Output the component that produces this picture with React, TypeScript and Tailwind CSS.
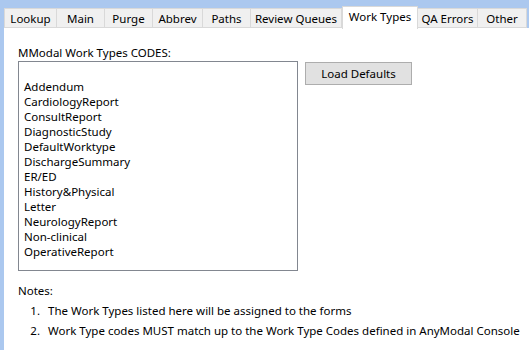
import React from "react";

const tabs = [
  { label: "Lookup", w: "w-[53px]" },
  { label: "Main", w: "w-[48px]" },
  { label: "Purge", w: "w-[48px]" },
  { label: "Abbrev", w: "w-[50px]" },
  { label: "Paths", w: "w-[48px]" },
  { label: "Review Queues", w: "w-[91px]" },
  { label: "Work Types", w: "w-[76px]", active: true },
  { label: "QA Errors", w: "w-[60px]" },
  { label: "Other", w: "w-[49px]" },
];

const items = [
  "",
  "Addendum",
  "CardiologyReport",
  "ConsultReport",
  "DiagnosticStudy",
  "DefaultWorktype",
  "DischargeSummary",
  "ER/ED",
  "History&Physical",
  "Letter",
  "NeurologyReport",
  "Non-clinical",
  "OperativeReport",
];

export default function App() {
  return (
    <div className="w-[529px] h-[350px] bg-[#abc8ef] flex flex-col overflow-hidden text-[11.5px] leading-[15px] text-black [font-family:'Noto_Sans',sans-serif]">
      <div className="flex items-end pl-[4px] pt-[5px] h-[28px] shrink-0">
        {tabs.map((t) =>
          t.active ? (
            <div
              key={t.label}
              className={`${t.w} h-[23px] bg-white border border-b-0 border-[#d9d9d9] flex items-start justify-center pt-[2px] relative z-10 -mb-px whitespace-nowrap`}
            >
              {t.label}
            </div>
          ) : (
            <div
              key={t.label}
              className={`${t.w} h-[20px] bg-[#f0f0f0] border border-l-0 first:border-l border-[#d9d9d9] flex items-center justify-center whitespace-nowrap`}
            >
              {t.label}
            </div>
          )
        )}
      </div>
      <div className="flex-1 ml-[4px] bg-white pl-[14px] pt-[17px]">
        <div>MModal Work Types CODES:</div>
        <div className="flex items-start mt-px">
          <div className="w-[280px] h-[210px] border border-[#828790] pl-[5px] pt-[2px]">
            {items.map((it, i) => (
              <div key={i} className="h-[15px] whitespace-nowrap">
                {it}
              </div>
            ))}
          </div>
          <button className="ml-[7px] mt-px w-[107px] h-[23px] bg-[#e1e1e1] border border-[#adadad] flex items-center justify-center">
            Load Defaults
          </button>
        </div>
        <div className="mt-[10px] leading-[20px] whitespace-nowrap">
          <div>Notes:</div>
          <div className="flex">
            <span className="w-[22px] text-right">1.</span>
            <span className="ml-[8px]">The Work Types listed here will be assigned to the forms</span>
          </div>
          <div className="flex">
            <span className="w-[22px] text-right">2.</span>
            <span className="ml-[8px]">Work Type codes MUST match up to the Work Type Codes defined in AnyModal Console</span>
          </div>
        </div>
      </div>
    </div>
  );
}
